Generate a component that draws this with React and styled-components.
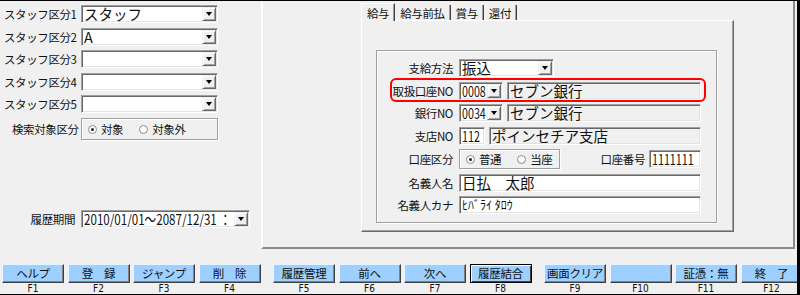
import React from 'react';
import styled, { createGlobalStyle, css } from 'styled-components';

const Global = createGlobalStyle`
  html, body { margin: 0; padding: 0; }
  body { width: 800px; height: 295px; overflow: hidden; background: #f0f0f0; font-family: "Noto Sans CJK JP", sans-serif; }
  * { box-sizing: border-box; }
`;

const Screen = styled.div`
  width: 800px;
  height: 295px;
  background: #f0f0f0;
  border-top: 1px solid #000;
  border-right: 3px solid #000;
  border-bottom: 1px solid #000;
  display: flex;
  flex-direction: column;
  overflow: hidden;
  color: #111;
  font-family: "Noto Sans CJK JP", sans-serif;
  font-size: 12px;
`;

const Main = styled.div`
  height: 262px;
  flex: none;
  display: flex;
  align-items: flex-start;
`;

const LeftPane = styled.div`
  width: 261px;
  flex: none;
  padding: 4px 0 0 4px;
  display: flex;
  flex-direction: column;
`;

const StaffGrid = styled.div`
  display: grid;
  grid-template-columns: 77px 137px;
  row-gap: 4.5px;
  align-items: center;
`;

const SideRow = styled.div`
  display: flex;
  align-items: center;
  margin-top: ${p => p.$mt}px;
`;

const labelText = css`
  font-size: 11.5px;
  letter-spacing: -0.4px;
  line-height: 14px;
  white-space: nowrap;
`;

const SideLabel = styled.span`
  ${labelText};
  width: 77px;
  flex: none;
  text-align: ${p => p.$align || 'left'};
  padding-left: ${p => p.$pl || 0}px;
  padding-right: ${p => p.$pr || 0}px;
`;

const sunken = css`
  border: 1px solid;
  border-color: #a0a0a0 #fff #fff #a0a0a0;
  box-shadow: inset 1px 1px 0 #696969, inset -1px -1px 0 #e3e3e3;
`;

const ComboBox = styled.div`
  ${sunken};
  display: flex;
  align-items: center;
  height: ${p => p.$h || 18}px;
  width: ${p => p.$w}px;
  flex: none;
  background: #fff;
  padding: 0 1px;
`;

const Value = styled.span`
  flex: 1;
  min-width: 0;
  overflow: hidden;
  white-space: nowrap;
  font-size: 14.5px;
  line-height: 16px;
  padding-left: 1px;
`;

const Narrow = styled.span`
  display: inline-block;
  transform: scaleX(${p => p.$sx || 0.74});
  transform-origin: 0 50%;
`;

const DropButton = styled.span`
  flex: none;
  align-self: stretch;
  margin: 1px 0;
  width: 14px;
  background: #f0f0f0;
  border: 1px solid;
  border-color: #f0f0f0 #696969 #696969 #f0f0f0;
  box-shadow: inset 1px 1px 0 #fff, inset -1px -1px 0 #a0a0a0;
  display: flex;
  align-items: center;
  justify-content: center;
  &::after {
    content: '';
    border-left: 3.5px solid transparent;
    border-right: 3.5px solid transparent;
    border-top: 4px solid #000;
  }
`;

const TextBox = styled.div`
  ${sunken};
  height: ${p => p.$h || 18}px;
  width: ${p => (p.$w ? `${p.$w}px` : 'auto')};
  flex: ${p => (p.$w ? 'none' : '1')};
  background: ${p => (p.$ro ? '#f0f0f0' : '#fff')};
  padding: 0 2px;
  font-size: ${p => p.$fs || 14.5}px;
  line-height: 16px;
  overflow: hidden;
  white-space: nowrap;
`;

const RadioGroup = styled.div`
  width: ${p => p.$w}px;
  height: ${p => p.$h}px;
  flex: none;
  border: 1px solid #a0a0a0;
  box-shadow: inset 1px 1px 0 #fff, 1px 1px 0 #fff;
  display: flex;
  align-items: center;
  padding-left: 6px;
  gap: 16px;
`;

const RadioItem = styled.span`
  ${labelText};
  display: inline-flex;
  align-items: center;
  gap: 4px;
`;

const RadioDot = styled.span`
  width: 9px;
  height: 9px;
  border-radius: 50%;
  background: #fff;
  border: 1px solid #8a8a8a;
  position: relative;
  ${p =>
    p.$checked &&
    css`
      &::after {
        content: '';
        position: absolute;
        left: 2px;
        top: 2px;
        width: 3px;
        height: 3px;
        border-radius: 50%;
        background: #222;
      }
    `}
`;

const OuterPanel = styled.div`
  width: 534px;
  height: 248px;
  flex: none;
  border-left: 2px solid #fff;
  border-right: 2px solid #8a8a8a;
  border-bottom: 2px solid #8a8a8a;
  padding: 2px 0 0 98px;
`;

const TabStrip = styled.div`
  display: flex;
  height: 17px;
  align-items: flex-end;
`;

const Tab = styled.div`
  ${labelText};
  padding: 0 5px;
  height: ${p => (p.$active ? 18 : 15)}px;
  padding-top: ${p => (p.$active ? 2 : 1)}px;
  border-right: 1px solid #404040;
  box-shadow: inset -1px 0 0 #a0a0a0;
  ${p =>
    p.$active &&
    css`
      border-left: 1px solid #fff;
      border-top: 1px solid #fff;
      margin-bottom: -1px;
      position: relative;
      z-index: 1;
      background: #f0f0f0;
    `}
`;

const TabBody = styled.div`
  width: 373px;
  height: 212px;
  border-top: 1px solid #fff;
  border-left: 1px solid #fff;
  border-right: 1px solid #696969;
  border-bottom: 1px solid #696969;
  box-shadow: inset -1px -1px 0 #a0a0a0;
  padding: 29px 16px 8px 14px;
`;

const GroupBox = styled.div`
  height: 100%;
  border: 1px solid #a0a0a0;
  box-shadow: inset 1px 1px 0 #fff, 1px 1px 0 #fff;
  padding: 8px 15px 0 0;
  display: flex;
  flex-direction: column;
  gap: 4.5px;
`;

const FormRow = styled.div`
  display: flex;
  align-items: center;
  height: ${p => p.$h || 18}px;
  position: relative;
`;

const FormLabel = styled.span`
  ${labelText};
  width: 82px;
  flex: none;
  text-align: right;
  padding-right: 6px;
`;

const Fields = styled.div`
  flex: 1;
  display: flex;
  align-items: center;
  gap: 4px;
  height: 100%;
`;

const InlineLabel = styled.span`
  ${labelText};
  margin-left: auto;
`;

const Highlight = styled.div`
  position: absolute;
  left: 13px;
  right: -5px;
  top: -4px;
  bottom: -2px;
  border: 2px solid #f00;
  border-radius: 6px;
  pointer-events: none;
`;

const Footer = styled.div`
  display: flex;
  padding: 1px 0 0 2px;
  gap: 12.5px;
  flex: none;
`;

const FKeyGroup = styled.div`
  display: flex;
  gap: 3.5px;
  flex: none;
`;

const FKey = styled.div`
  width: 62px;
  flex: none;
  display: flex;
  flex-direction: column;
  align-items: center;
`;

const FButton = styled.div`
  width: 100%;
  height: 19px;
  background: #9dcfff;
  border: 1px solid;
  border-color: #e8f4ff #404040 #404040 #e8f4ff;
  box-shadow: inset -1px -1px 0 #808080;
  font-size: 11.5px;
  letter-spacing: -0.3px;
  line-height: 16px;
  text-align: center;
  white-space: pre;
  ${p =>
    p.$focused &&
    css`
      border-color: #000;
      box-shadow: inset 1px 1px 0 #fff, inset -1px -1px 0 #404040;
    `}
`;

const FName = styled.span`
  font-family: "DejaVu Sans Condensed", "Noto Sans CJK JP", sans-serif;
  font-size: 10px;
  line-height: 11px;
  height: 11px;
  color: #111;
`;

const Combo = ({ w, h, narrow, sx, children }) => (
  <ComboBox $w={w} $h={h}>
    <Value>{narrow ? <Narrow $sx={sx}>{children}</Narrow> : children}</Value>
    <DropButton />
  </ComboBox>
);

const Radio = ({ checked, children }) => (
  <RadioItem>
    <RadioDot $checked={checked} />
    {children}
  </RadioItem>
);

const staff = [
  ['スタッフ区分1', 'スタッフ'],
  ['スタッフ区分2', 'A'],
  ['スタッフ区分3', ''],
  ['スタッフ区分4', ''],
  ['スタッフ区分5', ''],
];

const keys = [
  [['ヘルプ', 'F1'], ['登　録', 'F2'], ['ジャンプ', 'F3'], ['削　除', 'F4']],
  [['履歴管理', 'F5'], ['前へ', 'F6'], ['次へ', 'F7'], ['履歴結合', 'F8', true]],
  [['画面クリア', 'F9'], ['', 'F10'], ['証憑：無', 'F11'], ['終　了', 'F12']],
];

export default function App() {
  return (
    <>
      <Global />
      <Screen>
        <Main>
          <LeftPane>
            <StaffGrid>
              {staff.map(([label, value]) => (
                <React.Fragment key={label}>
                  <SideLabel>{label}</SideLabel>
                  <Combo w={137}>{value}</Combo>
                </React.Fragment>
              ))}
            </StaffGrid>
            <SideRow $mt={5}>
              <SideLabel $pl={8}>検索対象区分</SideLabel>
              <RadioGroup $w={137} $h={22}>
                <Radio checked>対象</Radio>
                <Radio>対象外</Radio>
              </RadioGroup>
            </SideRow>
            <SideRow $mt={70}>
              <SideLabel $align="right" $pr={6}>履歴期間</SideLabel>
              <Combo w={169} narrow sx={0.8}>2010/01/01～2087/12/31 ：</Combo>
            </SideRow>
          </LeftPane>
          <OuterPanel>
            <TabStrip>
              <Tab $active>給与</Tab>
              <Tab>給与前払</Tab>
              <Tab>賞与</Tab>
              <Tab>還付</Tab>
            </TabStrip>
            <TabBody>
              <GroupBox>
                <FormRow>
                  <FormLabel>支給方法</FormLabel>
                  <Fields>
                    <Combo w={95}>振込</Combo>
                  </Fields>
                </FormRow>
                <FormRow>
                  <FormLabel>取扱口座NO</FormLabel>
                  <Fields>
                    <Combo w={44} narrow>0008</Combo>
                    <TextBox $ro>セブン銀行</TextBox>
                  </Fields>
                  <Highlight />
                </FormRow>
                <FormRow>
                  <FormLabel>銀行NO</FormLabel>
                  <Fields>
                    <Combo w={44} narrow>0034</Combo>
                    <TextBox $ro>セブン銀行</TextBox>
                  </Fields>
                </FormRow>
                <FormRow>
                  <FormLabel>支店NO</FormLabel>
                  <Fields>
                    <TextBox $w={26}><Narrow>112</Narrow></TextBox>
                    <TextBox $ro>ポインセチア支店</TextBox>
                  </Fields>
                </FormRow>
                <FormRow $h={20}>
                  <FormLabel>口座区分</FormLabel>
                  <Fields>
                    <RadioGroup $w={101} $h={20}>
                      <Radio checked>普通</Radio>
                      <Radio>当座</Radio>
                    </RadioGroup>
                    <InlineLabel>口座番号</InlineLabel>
                    <TextBox $w={52}><Narrow>1111111</Narrow></TextBox>
                  </Fields>
                </FormRow>
                <FormRow>
                  <FormLabel>名義人名</FormLabel>
                  <Fields>
                    <TextBox>日払　太郎</TextBox>
                  </Fields>
                </FormRow>
                <FormRow>
                  <FormLabel>名義人カナ</FormLabel>
                  <Fields>
                    <TextBox $fs={12}>ﾋﾊﾞﾗｲ ﾀﾛｳ</TextBox>
                  </Fields>
                </FormRow>
              </GroupBox>
            </TabBody>
          </OuterPanel>
        </Main>
        <Footer>
          {keys.map((group, gi) => (
            <FKeyGroup key={gi}>
              {group.map(([label, name, focused]) => (
                <FKey key={name}>
                  <FButton $focused={focused}>{label}</FButton>
                  <FName>{name}</FName>
                </FKey>
              ))}
            </FKeyGroup>
          ))}
        </Footer>
      </Screen>
    </>
  );
}
